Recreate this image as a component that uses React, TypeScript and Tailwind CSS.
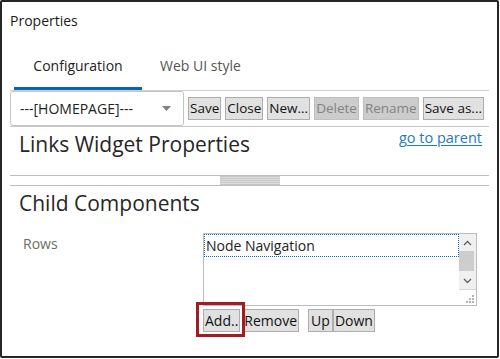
import React from 'react';

const btn = 'h-[23px] px-[1px] border border-[#adadad] bg-[#e1e1e1] text-[14px] leading-none text-[#111] flex items-center whitespace-nowrap';
const tbBtn = 'h-[23px] px-[1px] border border-[#adadad] bg-[#e1e1e1] text-[13.5px] leading-none text-[#111] flex items-center whitespace-nowrap';
const tbOff = 'h-[23px] px-[1px] border border-[#bfbfbf] bg-[#cccccc] text-[13.5px] leading-none text-[#838383] flex items-center whitespace-nowrap';

export default function App() {
    return (
        <div className="w-[500px] h-[359px] bg-white font-['Open_Sans',sans-serif] text-[#222]">
            <div className="w-[499px] h-[358px] border-2 border-[#262626] rounded-[2px] flex flex-col overflow-hidden">
                {/* Title */}
                <div className="h-[41px] pl-[8px] pt-[9px] text-[14px] leading-[20px] text-[#1a1a1a]">Properties</div>

                {/* Tabs */}
                <div className="mx-[8px] flex flex-col">
                    <div className="flex items-end h-[47px]">
                        <div className="flex flex-col items-center w-[128px] ml-[4px]">
                            <span className="text-[14px] leading-[20px] text-[#222] mb-[11px]">Configuration</span>
                            <div className="h-[3px] w-full bg-[#0067b8]" />
                        </div>
                        <span className="text-[14px] leading-[20px] text-[#555] ml-[18px] mb-[14px]">Web UI style</span>
                    </div>
                    <div className="h-px bg-[#cfcfcf]" />
                </div>

                {/* Toolbar */}
                <div className="mx-[8px] flex items-center h-[35px]">
                    <div className="w-[174px] h-[35px] shrink-0 border border-[#c4c4c4] rounded-[3px] flex items-center justify-between pl-[9px] pr-[12px]">
                        <span className="text-[14px] text-[#222] whitespace-nowrap">---[HOMEPAGE]---</span>
                        <svg width="9" height="5" viewBox="0 0 9 5"><path d="M0 0h9L4.5 5z" fill="#808080" /></svg>
                    </div>
                    <div className="flex items-center gap-[4px] ml-[4px]">
                        <button className={tbBtn}>Save</button>
                        <button className={tbBtn}>Close</button>
                        <button className={tbBtn}>New...</button>
                        <button className={tbOff}>Delete</button>
                        <button className={tbOff}>Rename</button>
                        <button className={tbBtn}>Save as...</button>
                    </div>
                </div>
                <div className="mx-[8px] h-px bg-[#c8c8c8]" />

                {/* Links widget heading */}
                <div className="mx-[8px] h-[48px] flex justify-between items-start">
                    <span className="ml-[9px] mt-[3px] text-[21px] leading-[28px] text-[#262626]">Links Widget Properties</span>
                    <a className="mr-[7px] mt-[1px] text-[14.5px] leading-[20px] text-[#1f7ac4] underline underline-offset-2">go to parent</a>
                </div>

                {/* Splitter */}
                <div className="mx-[8px] relative h-[11px] border-y border-[#bdbdbd]">
                    <div className="absolute left-[210px] top-0 w-[60px] h-[9px] bg-[repeating-linear-gradient(to_bottom,#c6c6c6_0px,#c6c6c6_1px,#dedede_1px,#dedede_2px)]" />
                </div>

                {/* Child components */}
                <div className="mx-[8px] ml-[17px] mt-[3px] text-[21px] leading-[28px] text-[#262626]">Child Components</div>

                <div className="flex mt-[16px]">
                    <span className="ml-[21px] w-[180px] text-[14px] leading-[20px] text-[#69705f] mt-[1px]">Rows</span>
                    <div className="flex flex-col">
                        <div className="w-[274px] h-[73px] border border-[#bcbcbc] flex">
                            <div className="flex-1">
                                <div className="h-[23px] border border-dotted border-[#0a6fc2] text-[14px] leading-[21px] pl-[1px] text-[#222]">Node Navigation</div>
                            </div>
                            <div className="w-[17px] flex flex-col bg-[#f0f0f0]">
                                <div className="h-[17px] flex items-center justify-center">
                                    <svg width="9" height="6" viewBox="0 0 9 6"><path d="M1 5l3.5-3.5L8 5" fill="none" stroke="#606060" strokeWidth="1.3" /></svg>
                                </div>
                                <div className="h-[20px] w-[15px] bg-[#cdcdcd]" />
                                <div className="h-[17px] mt-[1px] flex items-center justify-center">
                                    <svg width="9" height="6" viewBox="0 0 9 6"><path d="M1 1l3.5 3.5L8 1" fill="none" stroke="#606060" strokeWidth="1.3" /></svg>
                                </div>
                                <div className="flex-1 bg-white relative border-t border-[#d8d8d8]">
                                    <svg className="absolute right-[2px] bottom-[2px]" width="8" height="8" viewBox="0 0 8 8">
                                        <rect x="6" y="0" width="2" height="2" fill="#b5b5b5" />
                                        <rect x="3" y="3" width="2" height="2" fill="#b5b5b5" />
                                        <rect x="6" y="3" width="2" height="2" fill="#b5b5b5" />
                                        <rect x="0" y="6" width="2" height="2" fill="#b5b5b5" />
                                        <rect x="3" y="6" width="2" height="2" fill="#b5b5b5" />
                                        <rect x="6" y="6" width="2" height="2" fill="#b5b5b5" />
                                    </svg>
                                </div>
                            </div>
                        </div>
                        <div className="flex items-start mt-[-4px] ml-[-7px]">
                            <div className="relative z-10 border-[3px] border-[#a21c24] pt-[4px] pl-[4px] pr-[2px] pb-[2px]">
                                <button className={btn}>Add..</button>
                            </div>
                            <button className={btn + ' mt-[7px] ml-[-3px]'}>Remove</button>
                            <button className={btn + ' mt-[7px] ml-[9px] px-[2px]'}>Up</button>
                            <button className={btn + ' mt-[7px]'}>Down</button>
                        </div>
                    </div>
                </div>
            </div>
        </div>
    );
}
